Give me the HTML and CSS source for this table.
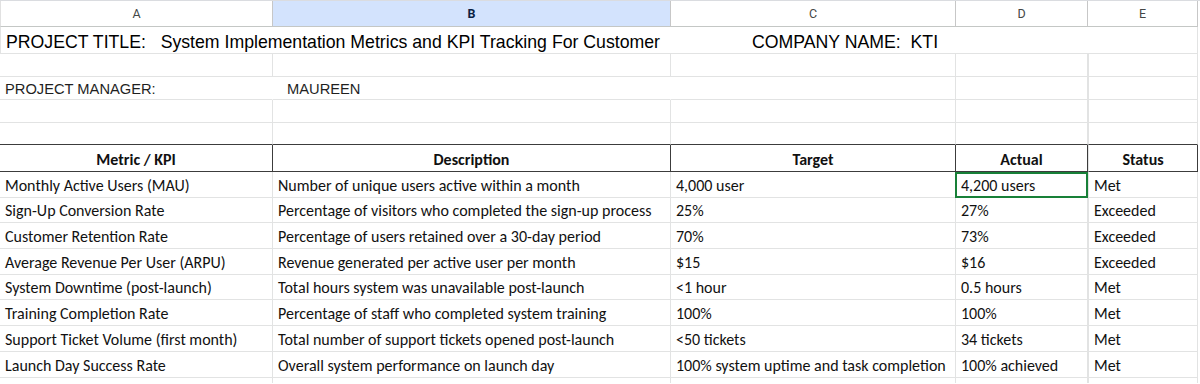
FILE: index.html
```html
<!DOCTYPE html>
<html>
<head>
<meta charset="utf-8">
<link rel="stylesheet" href="styles.css">
</head>
<body>
<div class="topbar"></div>
<div class="sheet">
  <div class="ch">A</div>
  <div class="ch sel">B</div>
  <div class="ch">C</div>
  <div class="ch">D</div>
  <div class="ch">E</div>

  <div class="c title span5"><span class="t-left">PROJECT TITLE:   System Implementation Metrics and KPI Tracking For Customer</span><span class="t-right">COMPANY NAME:  KTI</span></div>

  <div class="c r-short"></div><div class="c r-short"></div><div class="c r-short"></div><div class="c r-short"></div><div class="c r-short"></div>

  <div class="c r-short pm nr">PROJECT MANAGER:</div>
  <div class="c r-short pm nr name">MAUREEN</div>
  <div class="c r-short"></div>
  <div class="c r-short"></div>
  <div class="c r-short"></div>

  <div class="c r-short"></div><div class="c r-short"></div><div class="c r-short"></div><div class="c r-short"></div><div class="c r-short"></div>

  <div class="c r-pre"></div><div class="c r-pre"></div><div class="c r-pre"></div><div class="c r-pre"></div><div class="c r-pre"></div>

  <div class="c h first">Metric / KPI</div>
  <div class="c h">Description</div>
  <div class="c h">Target</div>
  <div class="c h">Actual</div>
  <div class="c h">Status</div>

  <div class="c d">Monthly Active Users (MAU)</div>
  <div class="c d">Number of unique users active within a month</div>
  <div class="c d">4,000 user</div>
  <div class="c d active">4,200 users</div>
  <div class="c d">Met</div>

  <div class="c d">Sign-Up Conversion Rate</div>
  <div class="c d">Percentage of visitors who completed the sign-up process</div>
  <div class="c d">25%</div>
  <div class="c d">27%</div>
  <div class="c d">Exceeded</div>

  <div class="c d">Customer Retention Rate</div>
  <div class="c d">Percentage of users retained over a 30-day period</div>
  <div class="c d">70%</div>
  <div class="c d">73%</div>
  <div class="c d">Exceeded</div>

  <div class="c d">Average Revenue Per User (ARPU)</div>
  <div class="c d">Revenue generated per active user per month</div>
  <div class="c d">$15</div>
  <div class="c d">$16</div>
  <div class="c d">Exceeded</div>

  <div class="c d">System Downtime (post-launch)</div>
  <div class="c d">Total hours system was unavailable post-launch</div>
  <div class="c d">&lt;1 hour</div>
  <div class="c d">0.5 hours</div>
  <div class="c d">Met</div>

  <div class="c d">Training Completion Rate</div>
  <div class="c d">Percentage of staff who completed system training</div>
  <div class="c d">100%</div>
  <div class="c d">100%</div>
  <div class="c d">Met</div>

  <div class="c d">Support Ticket Volume (first month)</div>
  <div class="c d">Total number of support tickets opened post-launch</div>
  <div class="c d">&lt;50 tickets</div>
  <div class="c d">34 tickets</div>
  <div class="c d">Met</div>

  <div class="c d">Launch Day Success Rate</div>
  <div class="c d">Overall system performance on launch day</div>
  <div class="c d">100% system uptime and task completion</div>
  <div class="c d">100% achieved</div>
  <div class="c d">Met</div>

  <div class="c last"></div><div class="c last"></div><div class="c last"></div><div class="c last"></div><div class="c last"></div>
</div>
</body>
</html>
```
FILE: styles.css
```css
html, body {
  margin: 0;
  padding: 0;
  background: #ffffff;
  overflow: hidden;
}
body {
  width: 1200px;
  height: 384px;
}
.topbar {
  height: 1px;
  background: #dadce0;
}
.sheet {
  display: grid;
  grid-template-columns: 273px 398px 285px 132px 110px;
  grid-template-rows: 26px 27px 23px 23px 23px 22px 27px 26px 25px 26px 26px 25px 26px 26px 26px 5px;
  width: 1198px;
}
.ch {
  box-sizing: border-box;
  border-right: 1px solid #c7c7c7;
  border-bottom: 1px solid #c4c7c5;
  font-family: Roboto, "Liberation Sans", Arial, sans-serif;
  font-size: 12.5px;
  color: #444746;
  display: flex;
  align-items: center;
  justify-content: center;
}
.ch:first-child {
  border-left: 1px solid #e1e1e1;
}
.ch.sel {
  background: #d3e3fd;
  color: #0b1f44;
  font-weight: 700;
}
.c {
  box-sizing: border-box;
  border-right: 1px solid #e2e3e3;
  border-bottom: 1px solid #e2e3e3;
  display: flex;
  align-items: flex-end;
  white-space: pre;
  color: #111111;
}
.sheet > .c:nth-child(5n+1) {
  border-left: 1px solid #e2e3e3;
}
.span5 {
  grid-column: 1 / span 5;
}
.sheet > .c.span5 {
  border-left: 1px solid #e2e3e3;
}
.title {
  font-family: "Liberation Sans", Arial, sans-serif;
  font-size: 17.7px;
  padding: 0 0 0 5px;
  color: #000000;
}
.t-left {
  width: 746px;
}
.pm {
  font-family: "Liberation Sans", Arial, sans-serif;
  font-size: 14.7px;
  padding: 0 0 2px 5px;
  color: #1f1f1f;
}
.nr {
  border-right-color: transparent;
}
.name {
  padding-left: 14px;
}
.sheet > .c.name {
  border-left: none;
}
.r-pre {
  border-bottom-color: #3c3c3c;
}
.h, .d {
  font-family: Carlito, Lato, "Liberation Sans", sans-serif;
  font-size: 16px;
  padding: 0 0 2px 5px;
}
.h {
  font-weight: 700;
  justify-content: center;
  padding-left: 0;
  border-right-color: #3c3c3c;
  border-bottom-color: #3c3c3c;
}
.sheet > .c.h.first {
  border-left-color: #3c3c3c;
}
.last {
  border-bottom: none;
}
.active {
  position: relative;
}
.active::after {
  content: "";
  position: absolute;
  left: -1px;
  top: 0;
  right: -1px;
  bottom: -1px;
  border: 2px solid #188038;
}
```
